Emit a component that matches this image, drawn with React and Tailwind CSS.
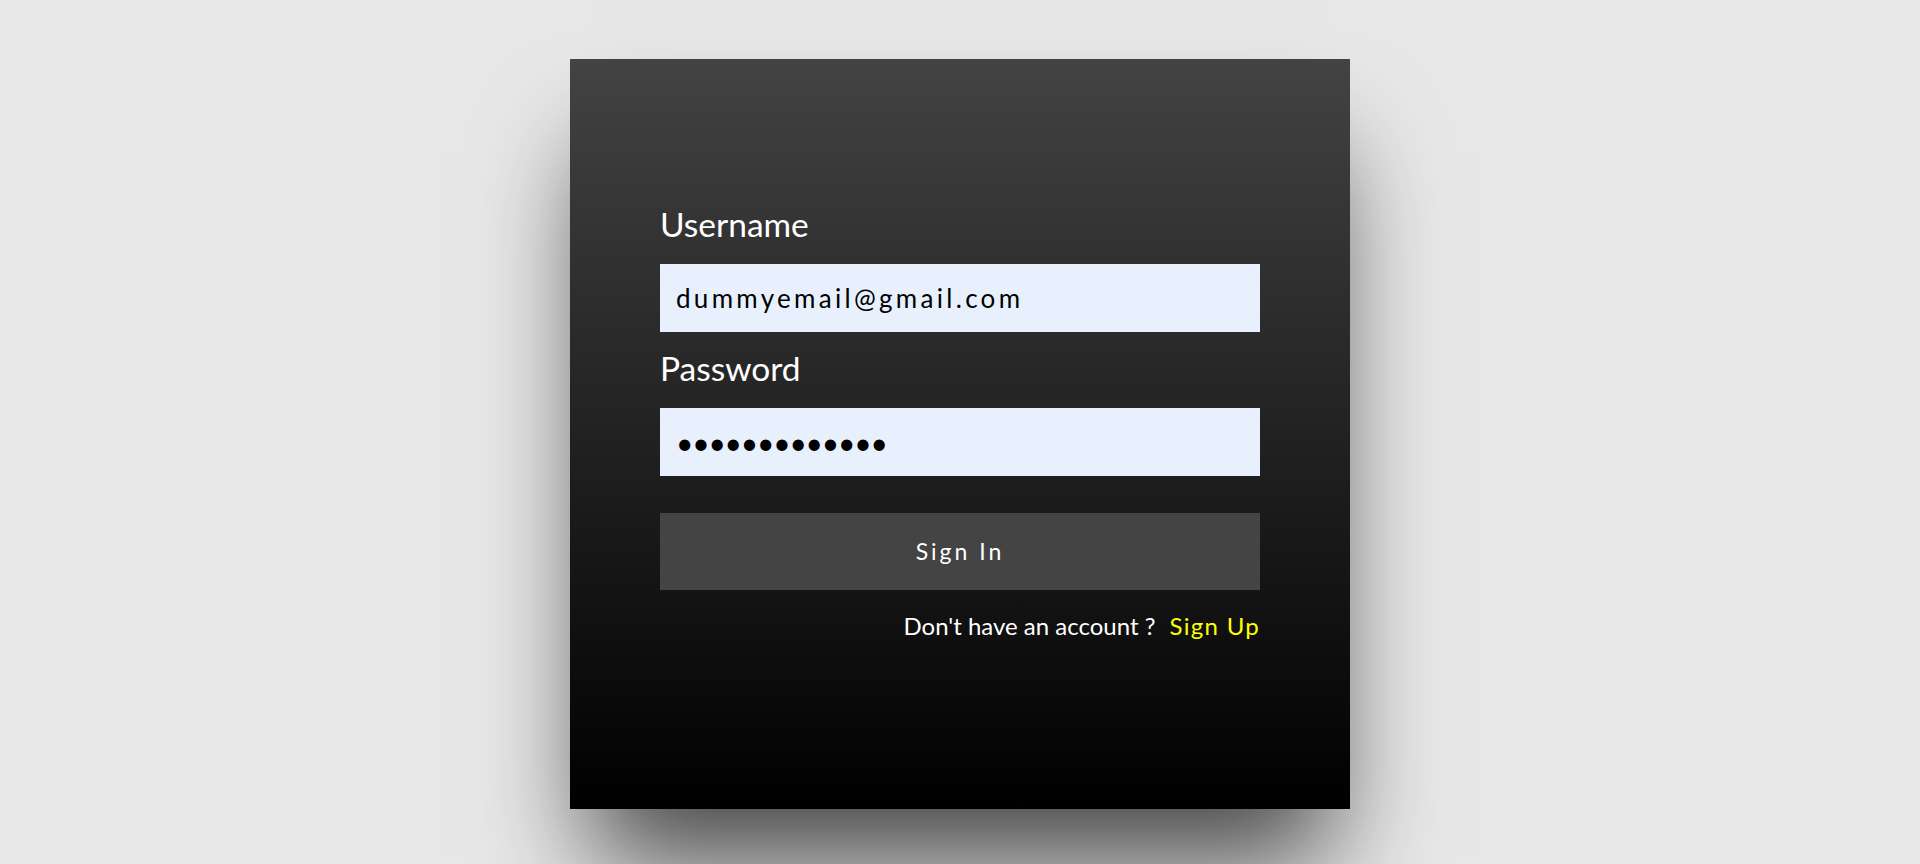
import React from "react";

export default function App() {
  return (
    <div className="min-h-screen w-full bg-[#e8e8e8] pt-[59px] font-['Lato',sans-serif]">
      <div className="mx-auto flex h-[750px] w-[780px] flex-col bg-[linear-gradient(#434343,#000000)] px-[90px] pt-[146px] shadow-[0_73px_104px_-20px_rgba(0,0,0,0.7)]">
        <label className="block h-[38px] text-[33.5px] leading-[38px] text-white">Username</label>
        <input
          readOnly
          type="text"
          value="dummyemail@gmail.com"
          className="mt-[21px] block h-[68px] w-[600px] border-0 bg-[#e8f0fe] pl-4 text-[26px] tracking-[3.3px] text-black outline-none"
        />
        <label className="mt-[17px] block h-[38px] text-[33.5px] leading-[38px] text-white">Password</label>
        <input
          readOnly
          type="password"
          value="abcdefghijklm"
          className="mt-[21px] block h-[68px] w-[600px] border-0 bg-[#e8f0fe] pl-4 text-[30px] tracking-[-1.2px] text-black outline-none"
        />
        <button
          type="button"
          className="mt-[37px] block h-[77px] w-[600px] bg-[#444444] text-[23px] tracking-[3px] text-white"
        >
          Sign In
        </button>
        <p className="mt-[21px] h-[29px] text-right text-[24px] leading-[29px] text-white">
          Don't have an account ?<span className="ml-[14px] tracking-[1.3px] text-[#ffff00]">Sign Up</span>
        </p>
      </div>
    </div>
  );
}
